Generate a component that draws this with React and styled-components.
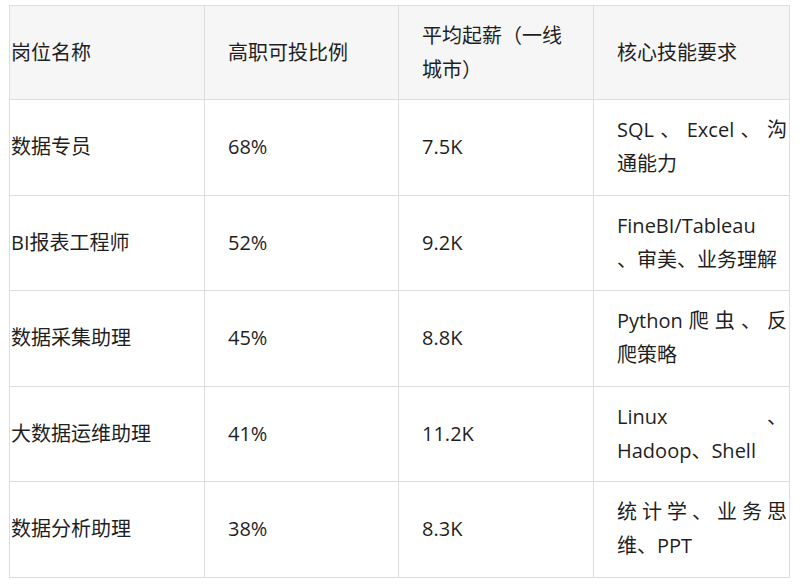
import React from 'react'
import styled, { createGlobalStyle } from 'styled-components'

const GlobalStyle = createGlobalStyle`
    body {
        margin: 0;
        background: #ffffff;
    }
`

const Page = styled.div`
    padding: 5px 0 0 9px;
`

const Table = styled.table`
    width: 780px;
    border-collapse: collapse;
    table-layout: fixed;
    font-family: "Open Sans", "Noto Sans CJK SC", sans-serif;
    font-size: 20px;
    line-height: 34px;
    color: #1f1f1f;
`

const HeadRow = styled.tr`
    background-color: #f6f6f6;
    height: 94px;
`

const Row = styled.tr`
    height: 95.5px;
`

const Cell = styled.td`
    border: 1px solid #dddddd;
    vertical-align: middle;
    padding: ${(props) => (props.first ? '0 2px 0 1px' : '0 2px 0 23px')};
    text-align: left;
    font-weight: normal;
`

const Line = styled.span`
    display: block;
    white-space: nowrap;
    text-align: justify;
    text-align-last: ${(props) => (props.justify ? 'justify' : 'left')};
`

const headers = [
    ['岗位名称'],
    ['高职可投比例'],
    ['平均起薪（一线', '城市）'],
    ['核心技能要求']
]

// each skill cell keeps the reference's own line breaks; the first line is spread
const jobs = [
    { name: '数据专员', ratio: '68%', salary: '7.5K', skills: ['SQL、Excel、沟', '通能力'], spread: true },
    { name: 'BI报表工程师', ratio: '52%', salary: '9.2K', skills: ['FineBI/Tableau', '、审美、业务理解'], spread: false },
    { name: '数据采集助理', ratio: '45%', salary: '8.8K', skills: ['Python爬虫、反', '爬策略'], spread: true },
    { name: '大数据运维助理', ratio: '41%', salary: '11.2K', skills: ['Linux 、', 'Hadoop、Shell'], spread: true },
    { name: '数据分析助理', ratio: '38%', salary: '8.3K', skills: ['统计学、业务思', '维、PPT'], spread: true }
]

function App () {
    return (
        <Page>
            <GlobalStyle />
            <Table lang="zh-CN">
                <colgroup>
                    <col style={{ width: 195 }} />
                    <col style={{ width: 194 }} />
                    <col style={{ width: 195 }} />
                    <col style={{ width: 196 }} />
                </colgroup>
                <thead>
                    <HeadRow>
                        {headers.map((lines, i) => (
                            <Cell as="th" key={lines[0]} first={i === 0}>
                                {lines.map((l) => <Line key={l}>{l}</Line>)}
                            </Cell>
                        ))}
                    </HeadRow>
                </thead>
                <tbody>
                    {jobs.map((job) => (
                        <Row key={job.name}>
                            <Cell first>{job.name}</Cell>
                            <Cell>{job.ratio}</Cell>
                            <Cell>{job.salary}</Cell>
                            <Cell>
                                {job.skills.map((l, i) => (
                                    <Line key={l} justify={job.spread && i === 0}>{l}</Line>
                                ))}
                            </Cell>
                        </Row>
                    ))}
                </tbody>
            </Table>
        </Page>
    )
}

export default App
